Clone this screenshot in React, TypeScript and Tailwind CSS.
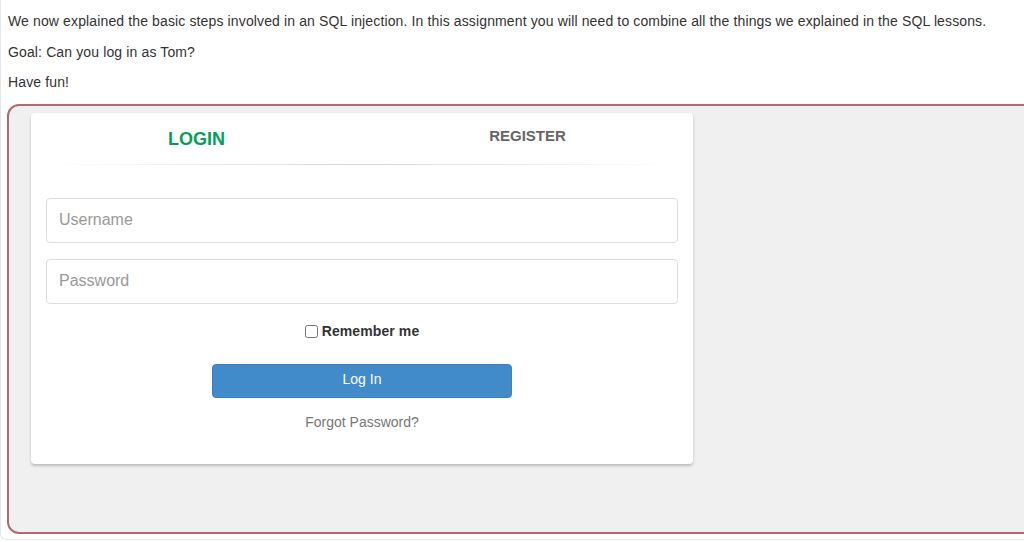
const font = { fontFamily: '"Liberation Sans", Arial, Helvetica, sans-serif' };

function LoginCard() {
  return (
    <div className="w-[662px] bg-white rounded-[4px] shadow-[0_2px_3px_rgba(0,0,0,0.22)]">
      {/* tabs */}
      <div className="grid grid-cols-2 items-start pt-[16px] h-[35px]">
        <a className="text-center font-bold uppercase text-[18px] leading-[20px] text-[#029f5b]">
          Login
        </a>
        <a className="text-center font-bold uppercase text-[15px] leading-[13px] text-[#666]">
          Register
        </a>
      </div>
      <div className="px-[15px] mt-[16px]">
        <hr className="border-0 h-px bg-linear-to-r from-transparent via-black/15 to-transparent" />
      </div>

      {/* form */}
      <form className="px-[15px] pt-[33px] pb-[32px] flex flex-col">
        <input
          type="text"
          placeholder="Username"
          className="h-[45px] w-full border border-[#ddd] rounded-[4px] px-[12px] pb-[2px] text-[16px] text-[#555] placeholder:text-[#999] outline-none"
        />
        <input
          type="password"
          placeholder="Password"
          className="mt-[16px] h-[45px] w-full border border-[#ddd] rounded-[4px] px-[12px] pb-[2px] text-[16px] text-[#555] placeholder:text-[#999] outline-none"
        />
        <label className="mt-[17px] flex items-center justify-center gap-[4px] h-[20px] text-[14px] tracking-[0.1px] font-bold text-[#333]">
          <input type="checkbox" className="w-[13px] h-[13px] m-0" />
          Remember me
        </label>
        <button
          type="button"
          className="mt-[23px] mx-auto w-[300px] h-[34px] pb-[3px] rounded-[4px] bg-[#428bca] text-white text-[14px] border border-[#3a80bd]"
        >
          Log In
        </button>
        <a className="mt-[14px] text-center text-[14px] leading-[20px] text-[#777]">
          Forgot Password?
        </a>
      </form>
    </div>
  );
}

export default function App() {
  return (
    <div style={font} className="w-[1024px] h-[542px] bg-white overflow-hidden">
      <div className="h-[540px] border-l border-b border-[#e6e6ee] rounded-bl-[6px] pl-[6px] overflow-hidden">
        <div className="pt-[11px] text-[14px] leading-[20px] tracking-[0.13px] text-[#333]">
          <p className="pl-[1px] mb-[10.5px]">
            We now explained the basic steps involved in an SQL injection. In this assignment you will need to combine all the things we explained in the SQL lessons.
          </p>
          <p className="pl-[1px] mb-[10.5px]">Goal: Can you log in as Tom?</p>
          <p className="pl-[1px]">Have fun!</p>
        </div>
        <div className="mt-[12px] w-[1040px] h-[430px] border-2 border-[#b06c6c] rounded-l-[12px] bg-[#f0f0f0] pt-[7px] pl-[22px]">
          <LoginCard />
        </div>
      </div>
    </div>
  );
}
